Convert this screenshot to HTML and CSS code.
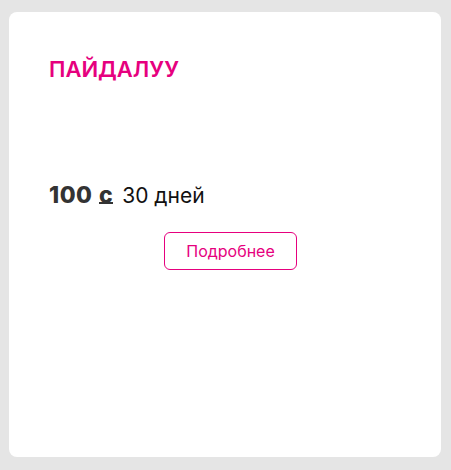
FILE: index.html
```html
<!DOCTYPE html>
<html lang="ru">
<head>
  <meta charset="UTF-8">
  <meta name="viewport" content="width=device-width, initial-scale=1.0">
  <title>Пайдалуу</title>
  <link rel="stylesheet" href="styles.css">
</head>
<body>
  <div class="card">
    <h2 class="card-title">ПАЙДАЛУУ</h2>
    <div class="price">
      <span class="price-sum">100 <span class="som">с</span></span>
      <span class="price-period">30 дней</span>
    </div>
    <div class="actions">
      <button class="more-btn">Подробнее</button>
    </div>
  </div>
</body>
</html>
```

FILE: styles.css
```css
body {
  margin: 0;
  padding: 12px 10px 13px 9px;
  background-color: #e5e5e5;
  font-family: Inter, Arial, sans-serif;
}

.card {
  height: 445px;
  box-sizing: border-box;
  padding: 43px 40px 0;
  background-color: #fff;
  border-radius: 8px;
}

.card-title {
  margin: 0;
  font-size: 22px;
  font-weight: 600;
  line-height: 28px;
  color: #e6007e;
}

.price {
  margin-top: 98px;
  display: flex;
  align-items: baseline;
  gap: 9px;
}

.price-sum {
  font-size: 23px;
  font-weight: 800;
  letter-spacing: 0.5px;
  color: #333;
}

.som {
  margin-left: 1px;
  border-bottom: 2px solid #333;
  line-height: 14px;
  display: inline-block;
}

.price-period {
  font-size: 21px;
  color: #111;
}

.actions {
  display: flex;
  justify-content: center;
  margin-top: 23px;
  padding-left: 11px;
}

.more-btn {
  width: 133px;
  height: 38px;
  background: #fff;
  border: 1px solid #e6007e;
  border-radius: 6px;
  color: #e6007e;
  font-family: Inter, Arial, sans-serif;
  font-size: 16px;
  cursor: pointer;
}
```
